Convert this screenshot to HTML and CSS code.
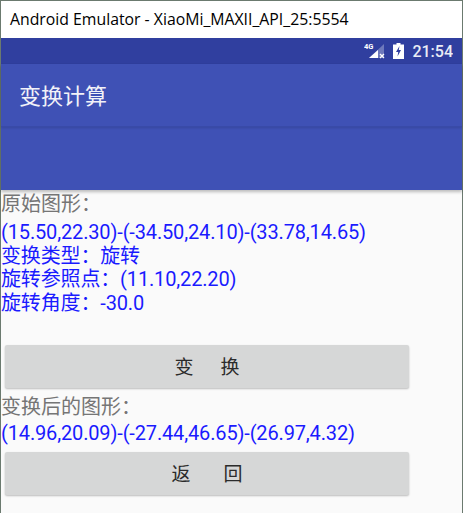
FILE: index.html
```html
<!DOCTYPE html>
<html lang="en">
<head>
    <meta charset="UTF-8">
    <meta name="viewport" content="width=device-width, initial-scale=1.0">
    <title>Android Emulator</title>
    <link rel="stylesheet" href="styles.css">
</head>
<body>
    <div class="window">
        <div class="title-bar">Android Emulator - XiaoMi_MAXII_API_25:5554</div>

        <div class="status-bar">
            <svg class="signal" width="23" height="18" viewBox="0 0 23 18">
                <text x="0" y="7" class="signal-label">4G</text>
                <path d="M20 2V16H5Z" fill="#fff" opacity="0.3"/>
                <path d="M14 8V16H5Z" fill="#fff"/>
                <path d="M16 12l4 4M20 12l-4 4" stroke="#fff" stroke-width="1.300"/>
            </svg>
            <svg class="battery" width="11" height="16" viewBox="0 0 11 16">
                <path d="M3.500 0h4v1.500H11V16H0V1.500h3.500Z" fill="#fff"/>
                <path d="M6.500 3L3 9h2.200L4.500 13.500 8 7H5.800Z" fill="#303f9f"/>
            </svg>
            <span class="clock">21:54</span>
        </div>

        <div class="app-bar">
            <div class="toolbar">变换计算</div>
            <div class="toolbar-ext"></div>
        </div>

        <div class="content">
            <div class="label">原始图形：</div>
            <div class="value first">(15.50,22.30)-(-34.50,24.10)-(33.78,14.65)</div>
            <div class="value">变换类型：旋转</div>
            <div class="value">旋转参照点：(11.10,22.20)</div>
            <div class="value">旋转角度：-30.0</div>

            <button class="btn btn-top"><span>变</span><span>换</span></button>

            <div class="label after">变换后的图形：</div>
            <div class="value result">(14.96,20.09)-(-27.44,46.65)-(26.97,4.32)</div>

            <button class="btn btn-bottom"><span>返</span><span>回</span></button>
        </div>
    </div>
</body>
</html>
```

FILE: styles.css
```css
* {
    margin: 0;
    padding: 0;
    box-sizing: border-box;
}

body {
    font-family: 'Roboto', 'Noto Sans CJK SC', sans-serif;
    background: #fafafa;
    height: 513px;
    overflow: hidden;
}

.window {
    height: 513px;
    border-top: 1px solid #6b7a6f;
    border-left: 1px solid #6b7a6f;
    border-right: 1px solid #6b7a6f;
    display: flex;
    flex-direction: column;
}

.title-bar {
    height: 37px;
    background: #fff;
    color: #000;
    font-family: 'Open Sans', 'Liberation Sans', sans-serif;
    font-size: 15.800px;
    line-height: 37px;
    padding-left: 9px;
}

.status-bar {
    height: 26px;
    background: #303f9f;
    display: flex;
    align-items: center;
    justify-content: flex-end;
    padding-right: 9px;
    color: #fff;
}

.signal {
    margin-right: 6px;
}

.signal-label {
    font-family: 'Roboto', sans-serif;
    font-size: 7.500px;
    font-weight: bold;
    fill: #fff;
}

.battery {
    margin-right: 8px;
}

.clock {
    font-size: 16px;
    font-weight: 500;
    opacity: 0.9;
}

.app-bar {
    background: #3f51b5;
    box-shadow: 0 2px 3px rgba(0, 0, 0, 0.25);
}

.toolbar {
    height: 63px;
    border-bottom: 1px solid #394aa8;
    box-shadow: 0 1px 2px rgba(0, 0, 0, 0.12);
    color: #f2f2f8;
    font-size: 22px;
    line-height: 65px;
    padding-left: 18px;
}

.toolbar-ext {
    height: 63px;
}

.content {
    flex: 1;
    display: flex;
    flex-direction: column;
    align-items: flex-start;
    padding-top: 1px;
    font-size: 20px;
}

.label {
    color: #757575;
    line-height: 27px;
}

.value {
    color: #1a1aff;
    line-height: 23.500px;
    letter-spacing: -0.150px;
}

.value.first {
    margin-top: 3px;
}

.btn {
    width: 404px;
    height: 43px;
    margin-left: 4px;
    padding-bottom: 2px;
    border: none;
    border-radius: 2px;
    background: #d6d7d7;
    color: #2b2b2b;
    font-family: inherit;
    font-size: 19px;
    box-shadow: 0 1px 2px rgba(0, 0, 0, 0.25);
    display: flex;
    align-items: center;
    justify-content: center;
}

.btn-top {
    margin-top: 30px;
    gap: 27px;
}

.label.after {
    margin-top: 6px;
}

.value.result {
    line-height: 25px;
}

.btn-bottom {
    margin-top: 6px;
    gap: 33px;
}
```
